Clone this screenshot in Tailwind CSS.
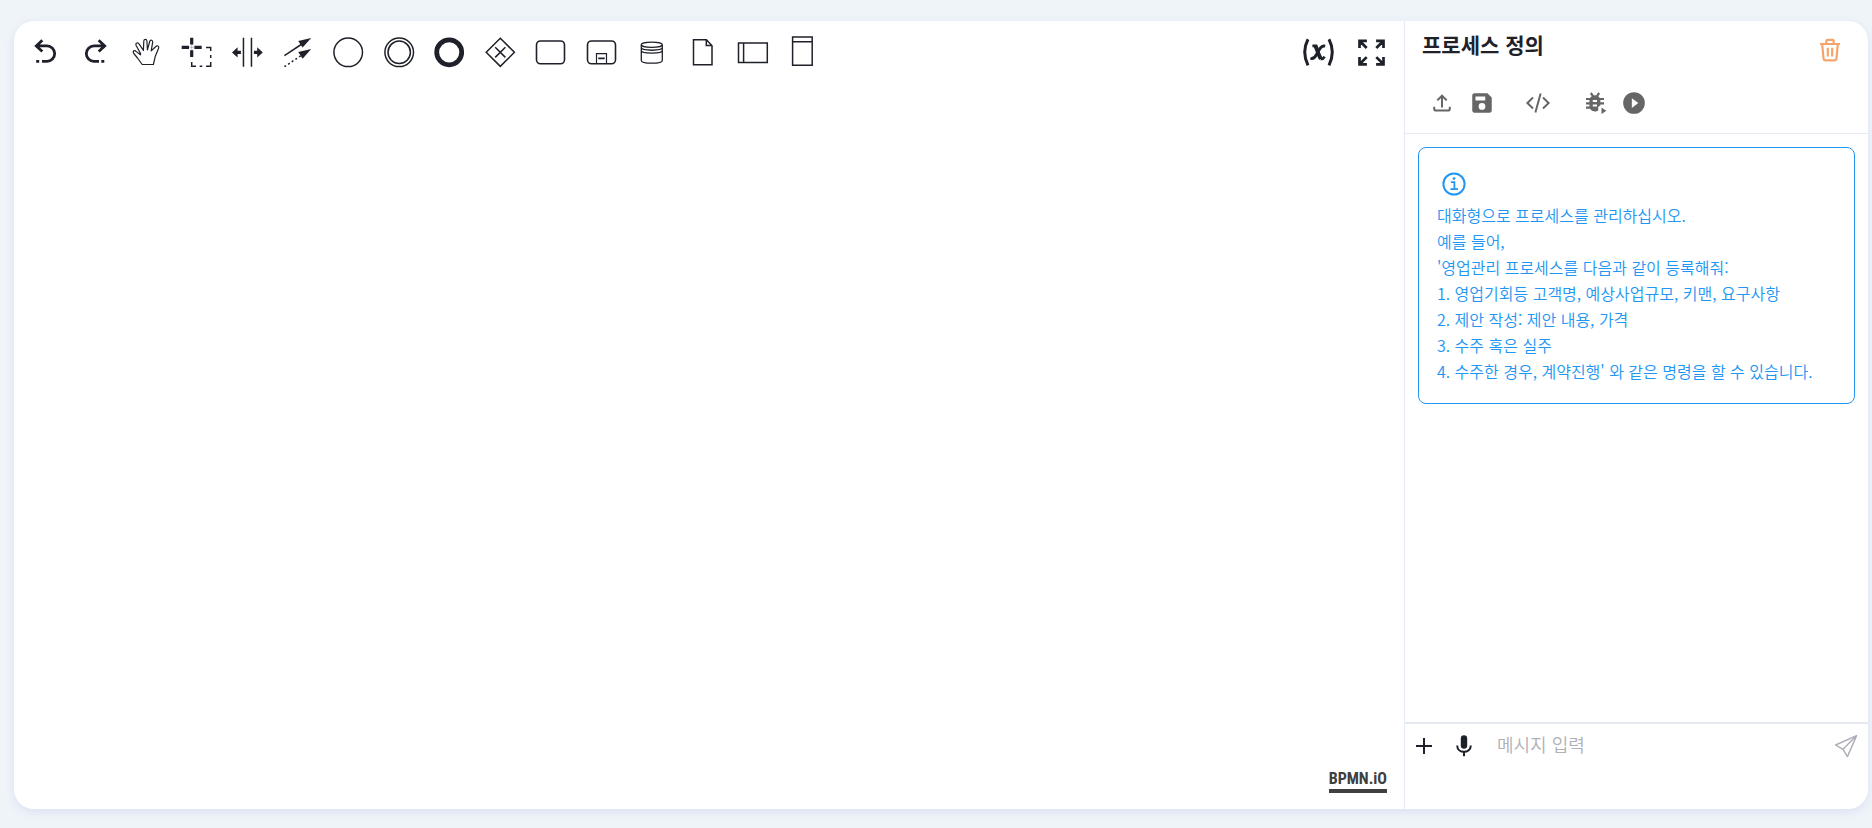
<!DOCTYPE html>
<html lang="ko">
  <head>
    <meta charset="UTF-8" />
    <meta name="viewport" content="width=device-width, initial-scale=1.0" />
    <title>프로세스 정의</title>
    <script src="https://cdn.jsdelivr.net/npm/@tailwindcss/browser@4"></script>
  </head>
  <body class="flex h-screen bg-[#eff4f9] pt-[21px] pr-1 pb-[19px] pl-[14px] font-['Noto_Sans_CJK_KR','Noto_Sans',sans-serif] text-[#1f212a]">
    <div class="flex flex-1 overflow-hidden rounded-[20px] bg-white shadow-[0_3px_10px_rgba(150,165,215,0.22)]">
      <!-- Modelador -->
      <main class="flex min-w-0 flex-1 flex-col justify-between">
        <div class="flex items-start justify-between pt-[11px] pr-[12px] pl-[6px]">
          <div class="grid w-[808px] grid-cols-[repeat(16,1fr)] justify-items-center" role="toolbar" aria-label="BPMN">
            <button type="button" aria-label="Undo">
              <svg class="size-10" viewBox="0 0 40 40" fill="none" stroke="currentColor" stroke-width="2.8">
                <path d="M17.3 8.3L11.3 13.9L17.3 19.5M11.3 13.9H22A7.7 7.7 0 0 1 22 29.3H17M11.2 29.3H14.2" />
              </svg>
            </button>
            <button type="button" aria-label="Redo">
              <svg class="size-10" viewBox="0 0 40 40" fill="none" stroke="currentColor" stroke-width="2.8">
                <path d="M22.7 8.3L28.7 13.9L22.7 19.5M28.7 13.9H18A7.7 7.7 0 0 0 18 29.3H23M25.3 29.3H28.3" />
              </svg>
            </button>
            <button type="button" aria-label="Hand tool">
              <svg class="size-10" viewBox="0 0 40 40" fill="none" stroke="currentColor" stroke-width="1.2" stroke-linejoin="round">
                <path d="M16.2 32.5L11.5 26L7.8 21.5C6.2 19 8.7 17.6 10.3 19.6L14.4 22.8L14.6 21.6L10 13.3C9.2 10.8 12 9.9 13.2 12.2L17.4 18.4L17.8 9C18.1 6.7 20.7 6.9 20.9 9L21.4 17.9L23.7 9.5C24.5 7.3 27 8.2 26.7 10.2L25.2 18.9L29.6 14.7C31 12.9 33.4 14.2 32.6 16.3L29.2 24.6L27.4 32.5Z" />
              </svg>
            </button>
            <button type="button" aria-label="Lasso tool">
              <svg class="size-10" viewBox="0 0 40 40" fill="none" stroke="currentColor">
                <path stroke-width="3.2" d="M4.7 15.3H12M17.4 15.3H24.7M14.7 5.7V12.4M14.7 18.2V25" />
                <path stroke-width="1" d="M12 15.3H17.4M14.7 12.4V18.2" stroke-opacity="0.25" />
                <path stroke-width="1.5" d="M29 15.4H33.7V19M33.7 23V26M33.7 30V34.2H29M25.3 34.2H22.7M19 34.2H14.7V30" />
              </svg>
            </button>
            <button type="button" aria-label="Space tool">
              <svg class="size-10" viewBox="0 0 40 40" fill="currentColor">
                <path d="M15.7 5.7h1.5v29h-1.5zM23.7 5.7h1.5v29h-1.5zM5 20.4l5.6-5.2v3.5h3.3v3.4h-3.3v3.5zM35.8 20.4l-5.6-5.2v3.5h-3.3v3.4h3.3v3.5z" />
              </svg>
            </button>
            <button type="button" aria-label="Connect tool">
              <svg class="size-10" viewBox="0 0 40 40" fill="none" stroke="currentColor" stroke-width="1.5">
                <path d="M6.4 23.6L24 12" />
                <path d="M6.4 34.7L24 23" stroke-dasharray="2 2.4" />
                <path fill="currentColor" stroke="none" d="M33.2 6L20.2 8.9L24.6 15.6ZM33.2 17L20.2 20L24.6 26.8Z" />
              </svg>
            </button>
            <button type="button" aria-label="Start event">
              <svg class="size-10" viewBox="0 0 40 40" fill="none" stroke="currentColor" stroke-width="1.5">
                <circle cx="20.2" cy="20.3" r="14.3" />
              </svg>
            </button>
            <button type="button" aria-label="Intermediate event">
              <svg class="size-10" viewBox="0 0 40 40" fill="none" stroke="currentColor" stroke-width="1.5">
                <circle cx="20.2" cy="20.3" r="14.3" />
                <circle cx="20.2" cy="20.3" r="11.2" />
              </svg>
            </button>
            <button type="button" aria-label="End event">
              <svg class="size-10" viewBox="0 0 40 40" fill="none" stroke="currentColor" stroke-width="4.8">
                <circle cx="20.2" cy="20.3" r="12.5" />
              </svg>
            </button>
            <button type="button" aria-label="Gateway">
              <svg class="size-10" viewBox="0 0 40 40" fill="none" stroke="currentColor" stroke-width="1.5">
                <path d="M20.3 6.2L34.4 20.3L20.3 34.4L6.2 20.3Z" />
                <path d="M15.2 15.2L25.4 25.4M25.4 15.2L15.2 25.4" />
              </svg>
            </button>
            <button type="button" aria-label="Task">
              <svg class="size-10" viewBox="0 0 40 40" fill="none" stroke="currentColor" stroke-width="1.6">
                <rect x="6.5" y="9" width="28" height="22.8" rx="4" />
              </svg>
            </button>
            <button type="button" aria-label="Sub process">
              <svg class="size-10" viewBox="0 0 40 40" fill="none" stroke="currentColor" stroke-width="1.6">
                <rect x="6.5" y="9" width="28" height="22.8" rx="4" />
                <path stroke-width="1.2" d="M15.5 31.5V21.7H25.5V31.5" />
                <path d="M17.3 26.4H23.7" />
              </svg>
            </button>
            <button type="button" aria-label="Data store">
              <svg class="size-10" viewBox="0 0 40 40" fill="none" stroke="currentColor" stroke-width="1.3">
                <ellipse cx="20.8" cy="12.7" rx="10.5" ry="2.6" />
                <path d="M10.3 12.7V28.4C10.3 32 31.3 32 31.3 28.4V12.7M10.3 15.6C10.3 19.1 31.3 19.1 31.3 15.6M10.3 18.4C10.3 21.9 31.3 21.9 31.3 18.4" />
              </svg>
            </button>
            <button type="button" aria-label="Data object">
              <svg class="size-10" viewBox="0 0 40 40" fill="none" stroke="currentColor" stroke-width="1.5">
                <path d="M11.5 7.8H24.4L30 13.8V32.8H11.5Z" />
                <path d="M24.3 7.8V13.6H30" />
              </svg>
            </button>
            <button type="button" aria-label="Participant">
              <svg class="size-10" viewBox="0 0 40 40" fill="none" stroke="currentColor" stroke-width="1.5">
                <path d="M6.5 11H35.3V30.4H6.5ZM11.6 11V30.4" />
              </svg>
            </button>
            <button type="button" aria-label="Vertical participant">
              <svg class="size-10" viewBox="0 0 40 40" fill="none" stroke="currentColor" stroke-width="1.5">
                <path d="M9.6 4.9H29.2V33.3H9.6ZM9.6 9.8H29.2" />
              </svg>
            </button>
          </div>
          <div class="flex gap-[13px]">
            <button type="button" aria-label="Variables">
              <svg class="size-10" viewBox="0 0 40 40" fill="none" stroke="currentColor">
                <path stroke-width="3" d="M9 7.3Q2.4 20 9 33.3M30 7.3Q36.6 20 30 33.3" />
                <path stroke-width="4" d="M16.2 13.2C18.2 17 19.4 23.4 22 26.8" />
                <path stroke-width="2.8" d="M13.4 13.8H17M21.8 26.8C23.4 27.2 24.8 26 25.6 24.6M26.2 14.2C21.6 12.8 19.8 18.6 17.8 22C16.2 25.2 14.2 27.4 11.4 26.2" />
              </svg>
            </button>
            <button type="button" aria-label="Fullscreen">
              <svg class="size-10" viewBox="0 0 40 40" fill="none" stroke="currentColor" stroke-width="2.7">
                <path d="M14.9 8.8H7.5V16M7.5 8.8L14.7 16M24.1 8.8H31.5V16M31.5 8.8L24.3 16M14.9 32.3H7.5V25M7.5 32.3L14.7 25.1M24.1 32.3H31.5V25M31.5 32.3L24.3 25.1" />
              </svg>
            </button>
          </div>
        </div>
        <a href="#" class="mr-[17px] mb-[16px] self-end border-b-4 border-[#404040] font-['Liberation_Sans_Narrow','Roboto_Condensed','Open_Sans_Condensed','DejaVu_Sans_Condensed',sans-serif] text-[16px] leading-[20px] font-bold text-[#404040]">BPMN.iO</a>
      </main>

      <!-- Panel de chat -->
      <aside class="flex w-[464px] shrink-0 flex-col border-l border-[#e5eaf2]">
        <header class="border-b border-[#e5eaf2] pb-[10px]">
          <div class="flex h-[62px] items-start justify-between pt-[8px] pr-[24px] pl-[17px]">
            <h1 class="text-[21px] leading-[30px] font-bold">프로세스 정의</h1>
            <button type="button" aria-label="삭제" class="pt-[7px] text-[#f5a46c]">
              <svg class="size-7" viewBox="0 0 28 28" fill="none" stroke="currentColor" stroke-width="2.2">
                <path d="M4 8H24M6.2 8L7.5 22.3Q7.7 24.3 9.7 24.3H18.3Q20.3 24.3 20.5 22.3L21.8 8M10.3 8V5.2Q10.3 3.8 11.7 3.8H16.3Q17.7 3.8 17.7 5.2V8M11.8 11.8V20.5M16.2 11.8V20.5" />
              </svg>
            </button>
          </div>
          <div class="flex gap-4 pl-[17px] text-[#666666]">
            <div class="flex">
              <button type="button" aria-label="업로드" class="flex size-10 items-center justify-center">
                <svg class="size-6" viewBox="0 0 24 24" fill="none" stroke="currentColor" stroke-width="2">
                  <path d="M12 16.5V5M7.3 9.4L12 4.7L16.7 9.4M4.2 15.8V17.8Q4.2 19.6 6 19.6H18Q19.8 19.6 19.8 17.8V15.8" />
                </svg>
              </button>
              <button type="button" aria-label="저장" class="flex size-10 items-center justify-center">
                <svg class="size-[26px]" viewBox="0 0 24 24" fill="currentColor">
                  <path fill-rule="evenodd" d="M17 3H5C3.9 3 3 3.9 3 5V19C3 20.1 3.9 21 5 21H19C20.1 21 21 20.1 21 19V7ZM12 18.3A3.1 3.1 0 1 1 12 12.1A3.1 3.1 0 1 1 12 18.3ZM6 6H15V9.6H6Z" />
                </svg>
              </button>
            </div>
            <button type="button" aria-label="XML" class="flex size-10 items-center justify-center">
              <svg class="size-[26px]" viewBox="0 0 26 26" fill="none" stroke="currentColor" stroke-width="2">
                <path d="M8 7.5L2.4 13L8 18.5M18 7.5L23.6 13L18 18.5M15.6 3.5L10.4 22.5" />
              </svg>
            </button>
            <div class="flex">
              <button type="button" aria-label="디버그" class="flex size-10 items-center justify-center">
                <svg class="size-[26px]" viewBox="0 0 26 26" fill="none" stroke="currentColor">
                  <path fill="currentColor" stroke="none" fill-rule="evenodd" d="M14 5.2C17.5 5.2 19.4 8 19.4 10.5V15.3L17.2 17V20.4C16.2 21.2 15 21.5 14 21.5C10.4 21.5 8.4 18.6 8.4 16V10.5C8.4 8 10.4 5.2 14 5.2ZM11.8 10V12H16V10ZM11.8 14.5V16.5H16V14.5Z" />
                  <path stroke-width="2.2" d="M9.8 3L12.2 6.4M18.2 3L15.8 6.4M5 9H10M5 13.3H9.5M5 17.6H10M18 9H23M18.4 13.3H23" />
                  <path fill="currentColor" stroke="none" d="M20.5 17.5V24L25.3 20.8Z" />
                </svg>
              </button>
              <button type="button" aria-label="실행" class="flex size-10 items-center justify-center">
                <svg class="size-[26px]" viewBox="0 0 24 24" fill="currentColor">
                  <path fill-rule="evenodd" d="M12 2A10 10 0 1 0 12 22A10 10 0 1 0 12 2ZM10 16.5V7.5L16 12Z" />
                </svg>
              </button>
            </div>
          </div>
        </header>

        <div class="flex-1 px-[13px] pt-[13px]">
          <section class="rounded-lg border border-[#2196f3] px-[18px] pt-[22px] pb-[19px] text-[16px] leading-[26px] font-[350] text-[#2196f3]">
            <svg class="mb-1 ml-[3px] size-7" viewBox="0 0 28 28" fill="none" stroke="currentColor" stroke-width="2">
              <circle cx="14" cy="14" r="10.6" />
              <path stroke-width="1.8" d="M11 12.2H14.4V19M10.4 19.2H18" />
              <circle cx="14" cy="8.6" r="1.4" fill="currentColor" stroke="none" />
            </svg>
            <p>대화형으로 프로세스를 관리하십시오.</p>
            <p>예를 들어,</p>
            <p>'영업관리 프로세스를 다음과 같이 등록해줘:</p>
            <p>1. 영업기회등 고객명, 예상사업규모, 키맨, 요구사항</p>
            <p>2. 제안 작성: 제안 내용, 가격</p>
            <p>3. 수주 혹은 실주</p>
            <p>4. 수주한 경우, 계약진행' 와 같은 명령을 할 수 있습니다.</p>
          </section>
        </div>

        <form class="flex h-[87px] items-start border-t-2 border-[#e5eaf2] pt-[7px] pr-[7px] pl-[5px]">
          <button type="button" aria-label="추가" class="flex h-[30px] w-7 items-center justify-center">
            <svg class="size-6" viewBox="0 0 24 24" fill="none" stroke="currentColor" stroke-width="2">
              <path d="M12 4V20M4 12H20" />
            </svg>
          </button>
          <button type="button" aria-label="음성 입력" class="ml-3 flex h-[30px] w-7 items-center justify-center">
            <svg class="size-7" viewBox="0 0 28 28" fill="none" stroke="currentColor" stroke-width="2">
              <rect x="10.8" y="3.2" width="6.4" height="13.6" rx="3.2" fill="currentColor" stroke="none" />
              <path d="M7.2 13.4C7.2 22 20.8 22 20.8 13.4M14 19.8V24.2" />
            </svg>
          </button>
          <input type="text" aria-label="메시지 입력" placeholder="메시지 입력" class="ml-[19px] h-[26px] min-w-0 flex-1 text-[18px] leading-[26px] font-[350] outline-none placeholder:text-[#b0b0b6]" />
          <button type="submit" aria-label="전송" class="flex size-[30px] items-center justify-center text-[#b0acb8]">
            <svg class="size-[26px]" viewBox="0 0 26 26" fill="none" stroke="currentColor" stroke-width="1.4" stroke-linejoin="round">
              <path d="M23.6 2.6L2.6 12L10 16.3L14.4 23.6ZM23.6 2.6L10 16.3" />
            </svg>
          </button>
        </form>
      </aside>
    </div>
  </body>
</html>
